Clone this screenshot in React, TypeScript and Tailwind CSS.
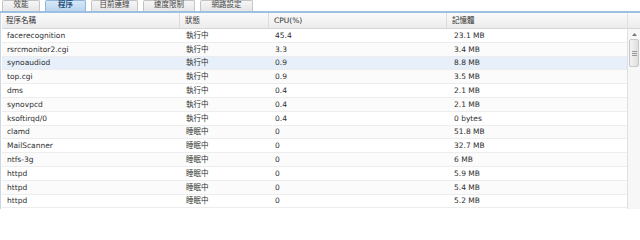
const TABS = [
  { label: "效能", w: "w-[38px]" },
  { label: "程序", w: "w-[41px]" },
  { label: "目前連線", w: "w-[47px]" },
  { label: "速度限制", w: "w-[52px]" },
  { label: "網路設定", w: "w-[53px]" },
];

type Proc = { name: string; status: string; cpu: string; mem: string };

const ROWS: Proc[] = [
  { name: "facerecognition", status: "執行中", cpu: "45.4", mem: "23.1 MB" },
  { name: "rsrcmonitor2.cgi", status: "執行中", cpu: "3.3", mem: "3.4 MB" },
  { name: "synoaudiod", status: "執行中", cpu: "0.9", mem: "8.8 MB" },
  { name: "top.cgi", status: "執行中", cpu: "0.9", mem: "3.5 MB" },
  { name: "dms", status: "執行中", cpu: "0.4", mem: "2.1 MB" },
  { name: "synovpcd", status: "執行中", cpu: "0.4", mem: "2.1 MB" },
  { name: "ksoftirqd/0", status: "執行中", cpu: "0.4", mem: "0 bytes" },
  { name: "clamd", status: "睡眠中", cpu: "0", mem: "51.8 MB" },
  { name: "MailScanner", status: "睡眠中", cpu: "0", mem: "32.7 MB" },
  { name: "ntfs-3g", status: "睡眠中", cpu: "0", mem: "6 MB" },
  { name: "httpd", status: "睡眠中", cpu: "0", mem: "5.9 MB" },
  { name: "httpd", status: "睡眠中", cpu: "0", mem: "5.4 MB" },
  { name: "httpd", status: "睡眠中", cpu: "0", mem: "5.2 MB" },
];

const COLS = "grid grid-cols-[178px_89px_178px_1fr]";

export default function App() {
  return (
    <div
      className="h-[209px] w-[640px] overflow-hidden bg-white text-[7.5px] text-[#2e2e2e]"
      style={{ fontFamily: '"DejaVu Sans", "Noto Sans CJK TC", sans-serif' }}
    >
      {/* Tabs */}
      <div className="flex h-[11px] items-end gap-[5px] pl-[2px]">
        {TABS.map((t, i) => (
          <div
            key={t.label}
            className={`flex h-[11px] items-end justify-center rounded-t-[2px] border border-b-0 pb-[1px] ${t.w} ${
              i === 1
                ? "border-[#8fb5da] bg-gradient-to-b from-[#d7e8f7] to-[#b9d5ef] font-bold text-[#1f4e7a]"
                : "border-[#c4c4c4] bg-gradient-to-b from-[#f6f6f6] to-[#e6e6e6] text-[#444]"
            }`}
          >
            {t.label}
          </div>
        ))}
      </div>
      <div className="h-[2px] bg-[#9dc0e2]" />

      <div className="flex h-[196px]">
        {/* Grid */}
        <div className="flex-1 border-l border-[#c9d6e3] pl-[1px]">
          <div className={`${COLS} h-[16px] items-center border-b border-[#d6d6d6] bg-gradient-to-b from-[#fafafa] to-[#ececec]`}>
            {["程序名稱", "狀態", "CPU(%)", "記憶體"].map((h, i) => (
              <div
                key={h}
                className={`flex h-full items-center ${i === 0 ? "pl-[4px]" : "pl-[5px]"} ${i < 3 ? "border-r border-[#dcdcdc]" : ""}`}
              >
                {h}
              </div>
            ))}
          </div>
          {ROWS.map((r, i) => (
            <div
              key={i}
              className={`${COLS} h-[13.8px] items-center border-b border-[#ededed] ${
                i === 2 ? "bg-[#e7f0fa]" : i % 2 === 1 ? "bg-[#fbfbfb]" : "bg-white"
              }`}
            >
              <div className="pl-[5px]">{r.name}</div>
              <div className="pl-[6px]">{r.status}</div>
              <div className="pl-[6px]">{r.cpu}</div>
              <div className="pl-[7px]">{r.mem}</div>
            </div>
          ))}
        </div>

        {/* Scrollbar column */}
        <div className="flex w-[13px] flex-col border-l border-[#e0e0e0] bg-[#f7f7f7]">
          <div className="h-[16px] border-b border-[#d6d6d6] bg-gradient-to-b from-[#fafafa] to-[#ececec]" />
          <div className="flex h-[10px] items-center justify-center">
            <svg width="5" height="3" viewBox="0 0 5 3">
              <path d="M0 3 L2.5 0 L5 3 Z" fill="#777" />
            </svg>
          </div>
          <div className="mx-[1px] flex h-[28px] items-center justify-center rounded-[2px] border border-[#c8c8c8] bg-gradient-to-r from-[#f4f4f4] to-[#dedede]">
            <div className="flex flex-col gap-[1px]">
              <div className="h-px w-[5px] bg-[#999]" />
              <div className="h-px w-[5px] bg-[#999]" />
              <div className="h-px w-[5px] bg-[#999]" />
            </div>
          </div>
        </div>
      </div>
    </div>
  );
}
